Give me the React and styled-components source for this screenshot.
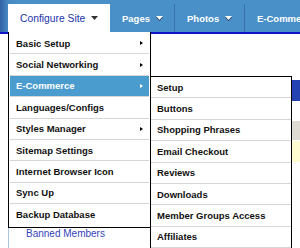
import React from 'react';
import styled, { createGlobalStyle } from 'styled-components';

const GlobalStyle = createGlobalStyle`
  body {
    margin: 0;
    background: #fff;
    font-family: "Liberation Sans", Arial, sans-serif;
  }
`;

const Page = styled.div`
  position: relative;
  width: 300px;
  height: 248px;
  overflow: hidden;
`;

const NavBar = styled.div`
  display: flex;
  align-items: flex-end;
  height: 32px;
  padding-left: 8px;
  background: linear-gradient(to right, #3262a6 0, #4689c2 8px, #4a90c8 20px);
  border-bottom: 2px solid #1212c6;
`;

const Tab = styled.div`
  position: relative;
  display: flex;
  align-items: center;
  flex-shrink: 0;
  box-sizing: border-box;
  height: 28px;
  width: ${p => p.$width}px;
  padding-left: 12px;
  gap: 6px;
  white-space: nowrap;
  background: ${p => (p.$active ? '#fff' : 'transparent')};
  color: ${p => (p.$active ? '#2233aa' : '#fff')};
  font-size: ${p => (p.$active ? '10.3px' : '9.5px')};
  font-weight: ${p => (p.$active ? 'normal' : 'bold')};
  border-right: ${p => (p.$active ? 'none' : '1px solid #3a70b2')};
  z-index: ${p => (p.$active ? 2 : 1)};
`;

const DownCaret = ({ light }) => (
  <svg width="7" height="5" viewBox="0 0 7 5">
    {light && <polygon points="0,1 7,1 3.5,5" fill="#1a2a50" />}
    <polygon points="0,0 7,0 3.5,4" fill={light ? '#fff' : '#333'} />
  </svg>
);

const DropMenu = styled.div`
  position: absolute;
  top: 100%;
  left: 0;
  width: 143px;
  box-sizing: border-box;
  padding: 1px 0 1px;
  background: #fff;
  border: 1px solid #000;
  border-top: none;
`;

const SubMenu = styled.div`
  position: absolute;
  top: 44px;
  left: 141px;
  width: 142px;
  box-sizing: border-box;
  background: #fff;
  border: 1px solid #000;
  border-bottom: none;
`;

const Item = styled.div`
  display: flex;
  align-items: center;
  justify-content: space-between;
  box-sizing: border-box;
  height: 21.4px;
  margin: 0 ${p => (p.$sub ? 0 : 1)}px;
  padding: 0 5px 0 ${p => (p.$sub ? 6 : 6)}px;
  font-size: 9.5px;
  font-weight: bold;
  white-space: nowrap;
  color: ${p => (p.$hot ? '#fff' : '#111')};
  background: ${p => (p.$hot ? '#4a9ccf' : '#fff')};
  border-bottom: 1px solid ${p => (p.$last ? 'transparent' : '#d6d6d6')};
`;

const RightArrow = styled.span`
  width: 0;
  height: 0;
  border-top: 2.5px solid transparent;
  border-bottom: 2.5px solid transparent;
  border-left: 3px solid ${p => (p.$hot ? '#fff' : '#000')};
  margin-right: 1px;
`;

const Content = styled.div`
  margin-left: 8px;
  height: 214px;
  border-left: 1px solid #a9c7e6;
  display: flex;
  flex-direction: column;
`;

const Band = styled.div`
  height: ${p => p.$h}px;
  margin-top: ${p => p.$mt}px;
  background: ${p => p.$bg};
`;

const Link = styled.a`
  margin-top: 66px;
  padding-left: 17px;
  font-size: 10px;
  color: #3344bb;
  text-decoration: none;
`;

const mainItems = [
  { label: 'Basic Setup', arrow: true },
  { label: 'Social Networking', arrow: true },
  { label: 'E-Commerce', arrow: true, hot: true },
  { label: 'Languages/Configs' },
  { label: 'Styles Manager', arrow: true },
  { label: 'Sitemap Settings' },
  { label: 'Internet Browser Icon' },
  { label: 'Sync Up' },
  { label: 'Backup Database' },
];

const subItems = [
  'Setup',
  'Buttons',
  'Shopping Phrases',
  'Email Checkout',
  'Reviews',
  'Downloads',
  'Member Groups Access',
  'Affiliates',
];

export default function App() {
  return (
    <>
      <GlobalStyle />
      <Page>
        <NavBar>
          <Tab $active $width={102}>
            Configure Site <DownCaret />
            <DropMenu>
              {mainItems.map((it, i) => (
                <Item key={it.label} $hot={it.hot} $last={i === mainItems.length - 1}>
                  {it.label}
                  {it.arrow && <RightArrow $hot={it.hot} />}
                </Item>
              ))}
              <SubMenu>
                {subItems.map(s => (
                  <Item key={s} $sub>{s}</Item>
                ))}
              </SubMenu>
            </DropMenu>
          </Tab>
          <Tab $width={65}>Pages <DownCaret light /></Tab>
          <Tab $width={70}>Photos <DownCaret light /></Tab>
          <Tab $width={90}>E-Commerce <DownCaret light /></Tab>
        </NavBar>
        <Content>
          <Band $mt={46} $h={21} $bg="#2442b2" />
          <Band $mt={20} $h={19} $bg="#dedcd2" />
          <Band $mt={1} $h={21} $bg="#fffcd2" />
          <Link href="#">Banned Members</Link>
        </Content>
      </Page>
    </>
  );
}
